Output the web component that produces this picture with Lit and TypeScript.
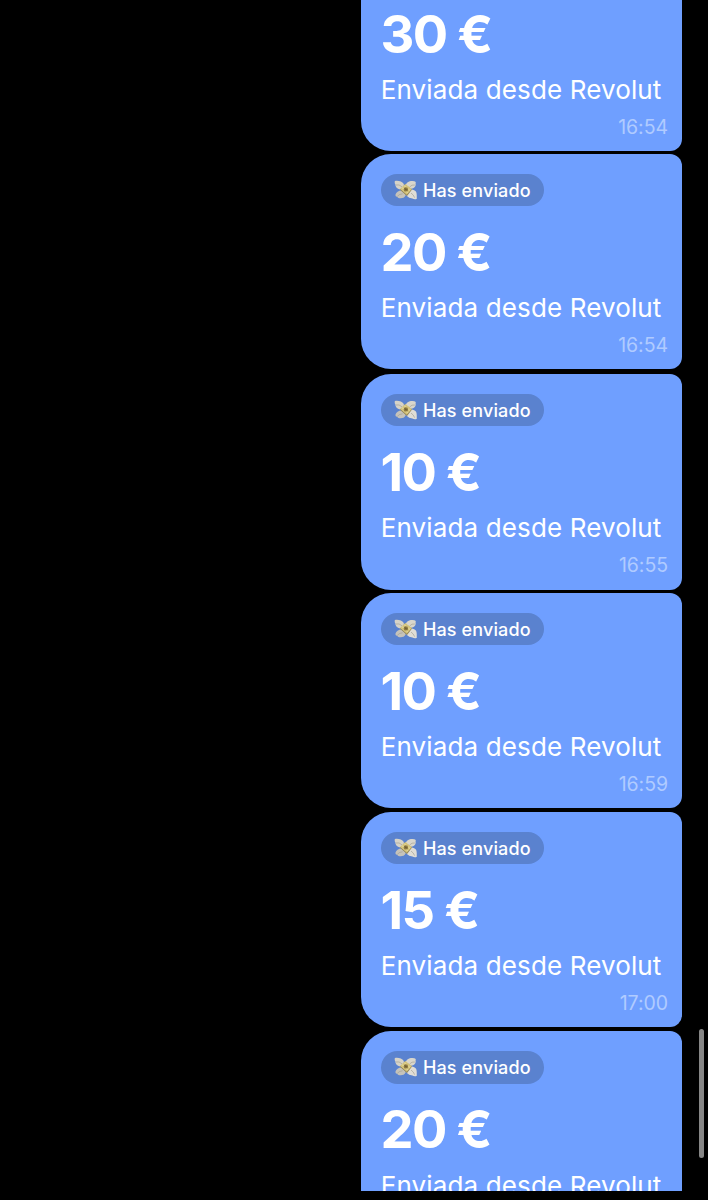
import { LitElement, html, css } from "lit";
import { customElement, property } from "lit/decorators.js";

@customElement("winged-cash")
class WingedCash extends LitElement {
  static styles = css`
    :host { display: block; width: 24px; height: 20px; }
    svg { display: block; width: 24px; height: 20px; }
  `;
  render() {
    return html`
      <svg viewBox="0 0 24 20" aria-hidden="true">
        <path d="M.9 1 C4 .4 8 1.2 9.8 4 L10 8.5 L6.5 9.6 C4 9.4 1.2 7.2 1.4 4.6 C.6 3.4 .5 2 .9 1Z" fill="#d6d3c8" />
        <path d="M11.8 5.8 C11.8 2.6 15 .8 18.5 .9 C21.5 .9 22.3 2.2 21.6 3.4 C22.3 5.6 20.8 7.6 18.4 8.4 L15 9Z" fill="#d9d6cc" />
        <path d="M7.5 10.6 C4.6 10.6 2 12.4 1.5 14.6 C1.2 16.4 2.4 17 3.2 16.8 C4.2 18.6 6.4 18.6 8 18 C10.4 17.9 11.6 16.2 12 14Z" fill="#c6c3ba" />
        <path d="M15 10 C17.5 8.8 21 9.8 22.2 12 C23 14 22.7 16.4 22.8 18.7 C21.4 19.6 19.6 19.2 18.4 18.4 C15.4 18.4 12.6 16.6 12 13.8Z" fill="#e0ddd6" />
        <path d="M2 5 Q5 4 8 6.8 M20.8 5 Q17.8 4.4 15.6 7 M3.4 16.2 Q5.6 13.8 8.6 13.8 M17 13 Q19.6 14.8 20.6 17.6" fill="none" stroke="#a39f92" stroke-width=".65" />
        <path d="M6 9.8 L11 4.5 L18 9.5 L13 16Z" fill="#8f8150" />
        <path d="M6.1 8.9 L11.4 4 L17.8 8.9 L12.8 14.8Z" fill="#d5c47b" />
        <path d="M8 7.6 L13.8 12.8 M10.2 5.8 L16 10.5" stroke="#e8dca2" stroke-width=".9" />
        <circle cx="11.9" cy="9.4" r="2.2" fill="#8c783f" />
        <path d="M11.2 8.6 l1.3 1.6" stroke="#54472d" stroke-width=".9" />
      </svg>
    `;
  }
}

@customElement("payment-bubble")
class PaymentBubble extends LitElement {
  @property() amount = "";
  @property() time = "";

  static styles = css`
    :host {
      display: block;
      box-sizing: border-box;
      flex: none;
      width: 321.4px;
      height: 215.7px;
      padding: 20px 14.4px 0 19.7px;
      background: #6f9fff;
      border-radius: 30px 12px 12px 30px;
      color: #fff;
      white-space: nowrap;
    }
    .chip {
      display: flex;
      align-items: center;
      box-sizing: border-box;
      width: 163.6px;
      height: 32.4px;
      padding-left: 13px;
      gap: 5.3px;
      border-radius: 17px;
      background: #5a82cf;
      font-size: 18px;
      font-weight: 500;
      letter-spacing: 0.12px;
    }
    .label {
      padding-top: 0.8px;
    }
    .amount {
      margin: 15.7px 0 0 -0.3px;
      height: 60px;
      line-height: 60px;
      font-size: 52.5px;
      font-weight: 700;
      letter-spacing: -1.6px;
    }
    .note {
      margin-top: 10.4px;
      height: 32px;
      line-height: 32px;
      font-size: 26px;
      letter-spacing: 0.13px;
    }
    .time {
      margin-top: 8.8px;
      height: 24px;
      line-height: 24px;
      font-size: 19.5px;
      letter-spacing: -0.05px;
      text-align: right;
      color: #b0cbff;
    }
  `;
  render() {
    return html`
      <div class="chip"><winged-cash></winged-cash><span class="label">Has enviado</span></div>
      <div class="amount">${this.amount}</div>
      <div class="note">Enviada desde Revolut</div>
      <div class="time">${this.time}</div>
    `;
  }
}

@customElement("app-root")
class AppRoot extends LitElement {
  static styles = css`
    :host {
      display: flex;
      justify-content: flex-end;
      box-sizing: border-box;
      width: 708px;
      height: 1200px;
      padding-bottom: 9.5px;
      overflow: hidden;
      background: #000;
      font-family: Inter, "Liberation Sans", sans-serif;
    }
    .feed {
      display: flex;
      flex-direction: column;
      overflow: hidden;
      height: 1190.5px;
    }
    .feed > :first-child { margin-top: -64.4px; }
    .rail {
      flex: none;
      box-sizing: border-box;
      width: 25.6px;
      padding: 1028.5px 4px 0 16.2px;
    }
    .thumb {
      width: 5.2px;
      height: 129.5px;
      border-radius: 3px;
      background: #868686;
    }
    .gap { flex: none; }
  `;
  private payments = [
    { amount: "30 €", time: "16:54", after: 2.4 },
    { amount: "20 €", time: "16:54", after: 4.5 },
    { amount: "10 €", time: "16:55", after: 3 },
    { amount: "10 €", time: "16:59", after: 3.4 },
    { amount: "15 €", time: "17:00", after: 3.8 },
    { amount: "20 €", time: "", after: 0 },
  ];
  render() {
    return html`
      <div class="feed">
        ${this.payments.map(
          (p) => html`<payment-bubble amount=${p.amount} time=${p.time}></payment-bubble>
            <div class="gap" style="height:${p.after}px"></div>`
        )}
      </div>
      <div class="rail"><div class="thumb"></div></div>
    `;
  }
}
